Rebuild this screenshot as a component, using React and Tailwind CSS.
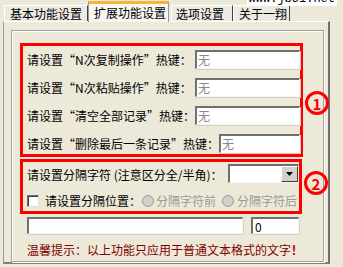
import React from "react";

const font = { fontFamily: '"Noto Sans CJK SC", "Noto Sans", sans-serif' };

// full-width quote cells, like the SimSun glyphs in the dialog
const Lq = () => <span className="inline-block w-[12px] text-right">“</span>;
const Rq = () => <span className="inline-block w-[12px] text-left">”</span>;

// sunken XP-classic edit box
const Edit = ({ className = "", value = "", gray = false }) => (
  <div
    className={`h-[19px] bg-white border-t-2 border-l-2 border-t-[#6f6f6f] border-l-[#6f6f6f] border-b border-r border-b-[#f6f6f6] border-r-[#f6f6f6] shadow-[1px_1px_0_#d4d0c8] pl-[1px] text-[12px] leading-[15px] ${
      gray ? "text-[#8a8a8a]" : "text-black"
    } ${className}`}
  >
    {value}
  </div>
);

const HotkeyRow = ({ name, labelW, inputW }) => (
  <div className="flex items-center h-[19px]">
    <div className={`${labelW} text-[12px] leading-[14px] text-black whitespace-nowrap`}>
      请设置<Lq />{name}<Rq />热键：
    </div>
    <Edit className={inputW} value="无" gray />
  </div>
);

const Marker = ({ n }) => (
  <div className="w-[24px] h-[24px] rounded-full border-[3px] border-[#f00] text-[#f00] flex items-center justify-center text-[15px] font-bold leading-none">
    {n}
  </div>
);

const Tab = ({ children, active, className = "" }) =>
  active ? (
    <div
      className={`relative z-10 h-[21px] -mb-[1px] bg-[#f7f6f0] border-t-[3px] border-t-[#f5b43a] border-l border-r border-l-[#919b9c] border-r-[#919b9c] flex items-center text-[12px] text-black ${className}`}
    >
      {children}
    </div>
  ) : (
    <div
      className={`h-[16px] bg-[#ecebe3] border-t border-l border-r border-t-[#ffffff] border-l-[#ffffff] border-r-[#404040] flex items-center text-[12px] text-black ${className}`}
    >
      {children}
    </div>
  );

export default function App() {
  return (
    <div className="relative w-[343px] h-[267px] bg-[#ece9d8] overflow-hidden" style={font}>
      {/* watermark */}
      <div className="absolute right-[6px] -top-[8px] bg-white px-[2px] text-[12px] leading-[14px] text-black z-20" style={{ fontFamily: '"Liberation Mono", monospace' }}>
        www.jb51.net
      </div>

      {/* tab strip */}
      <div className="flex items-end h-[21px] pl-[4px] leading-[14px]">
        <Tab className="w-[84px] pl-[5px]">基本功能设置</Tab>
        <Tab active className="w-[81px] pl-[5px]">扩展功能设置</Tab>
        <Tab className="w-[62px] pl-[4px] ml-[2px] border-l-[#404040]">选项设置</Tab>
        <Tab className="w-[57px] pl-[5px]">关于一翔</Tab>
      </div>

      {/* tab page */}
      <div className="ml-[3px] w-[327px] h-[243px] border-t border-l border-t-[#ffffff] border-l-[#9a9a9a] border-r-2 border-r-[#707070] border-b-2 border-b-[#808080] pl-[7px] pt-[8px]">
        {/* group frame */}
        <div className="w-[313px] h-[232px] border border-[#a0a0a0] shadow-[inset_1px_1px_0_#ffffff,1px_1px_0_#ffffff] pl-[8px] pt-[12px]">
          {/* box 1 */}
          <div className="flex gap-[2px]">
            <div className="w-[284px] h-[114px] border-[3px] border-[#f00] pl-[4px] pt-[4px] flex flex-col gap-[9px]">
              <HotkeyRow name="N次复制操作" labelW="w-[168px]" inputW="w-[105px]" />
              <HotkeyRow name="N次粘贴操作" labelW="w-[168px]" inputW="w-[105px]" />
              <HotkeyRow name="清空全部记录" labelW="w-[168px]" inputW="w-[105px]" />
              <HotkeyRow name="删除最后一条记录" labelW="w-[192px]" inputW="w-[81px]" />
            </div>
            <div className="pt-[48px]">
              <Marker n="1" />
            </div>
          </div>

          {/* box 2 */}
          <div className="flex gap-[2px] mt-[2px]">
            <div className="w-[284px] h-[55px] border-[3px] border-[#f00] pl-[4px] pt-[1px]">
              <div className="flex items-center h-[20px]">
                <div className="w-[201px] text-[12px] leading-[14px] whitespace-nowrap pt-[4px]">请设置分隔字符 (注意区分全/半角)：</div>
                <div className="w-[71px] h-[19px] bg-white border-t-2 border-l-2 border-t-[#6f6f6f] border-l-[#6f6f6f] border-b border-r border-b-[#f6f6f6] border-r-[#f6f6f6] flex justify-end">
                  <div className="w-[17px] h-[16px] bg-[#d4d0c8] border border-t-white border-l-white border-r-[#404040] border-b-[#404040] flex items-center justify-center">
                    <svg width="7" height="4" viewBox="0 0 7 4">
                      <path d="M0 0h7L3.5 4z" fill="#000" />
                    </svg>
                  </div>
                </div>
              </div>
              <div className="flex items-center h-[14px] mt-[11px] text-[12px] leading-[14px] whitespace-nowrap">
                <div className="w-[12px] h-[12px] bg-white border border-t-[#6f6f6f] border-l-[#6f6f6f] border-r-[#e0e0e0] border-b-[#e0e0e0] shadow-[inset_1px_1px_0_#404040]" />
                <div className="ml-[6px] w-[97px]">请设置分隔位置：</div>
                <div className="w-[12px] h-[12px] rounded-full bg-[#d4d0c8] border border-[#9c9c9c]" />
                <div className="ml-[2px] w-[66px] text-[#9a9a9a]">分隔字符前</div>
                <div className="w-[12px] h-[12px] rounded-full bg-[#d4d0c8] border border-[#9c9c9c]" />
                <div className="ml-[3px] text-[#9a9a9a]">分隔字符后</div>
              </div>
            </div>
            <div className="pt-[12px]">
              <Marker n="2" />
            </div>
          </div>

          {/* free inputs */}
          <div className="flex gap-[8px] pl-[7px] mt-[3px]">
            <Edit className="w-[216px] !h-[17px]" />
            <Edit className="w-[48px] !h-[17px] pl-[2px]" value="0" />
          </div>

          {/* hint */}
          <div className="pl-[7px] mt-[9px] text-[12px] leading-[14px] text-[#800000] whitespace-nowrap">
            温馨提示：以上功能只应用于普通文本格式的文字<span className="text-[#c00000] font-bold">！</span>
          </div>
        </div>
      </div>
    </div>
  );
}
